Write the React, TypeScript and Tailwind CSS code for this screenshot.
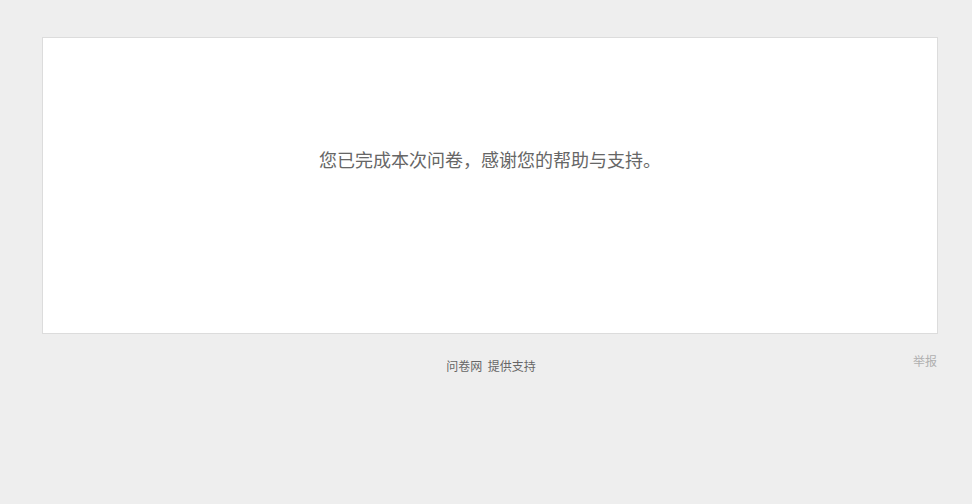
export default function App() {
  return (
    <div
      className="min-h-[504px] bg-[#eeeeee] pt-[37px]"
      style={{ fontFamily: '"Microsoft YaHei", "Noto Sans CJK SC", sans-serif' }}
    >
      <div className="ml-[42px] w-[896px]">
        <div className="h-[297px] border border-[#dcdcdc] bg-white pt-[109px] text-center">
          <p className="text-[18px] leading-[24px] text-[#666666]">
            您已完成本次问卷，感谢您的帮助与支持。
          </p>
        </div>
        <div className="relative mt-[18px] flex justify-center pl-[2px]">
          <span className="pt-[5px] text-[12px] leading-[18px] text-[#666666]">
            问卷网&nbsp;&nbsp;提供支持
          </span>
          <span className="absolute right-[1px] top-0 text-[12px] leading-[18px] text-[#b0b0b0]">
            举报
          </span>
        </div>
      </div>
    </div>
  )
}
